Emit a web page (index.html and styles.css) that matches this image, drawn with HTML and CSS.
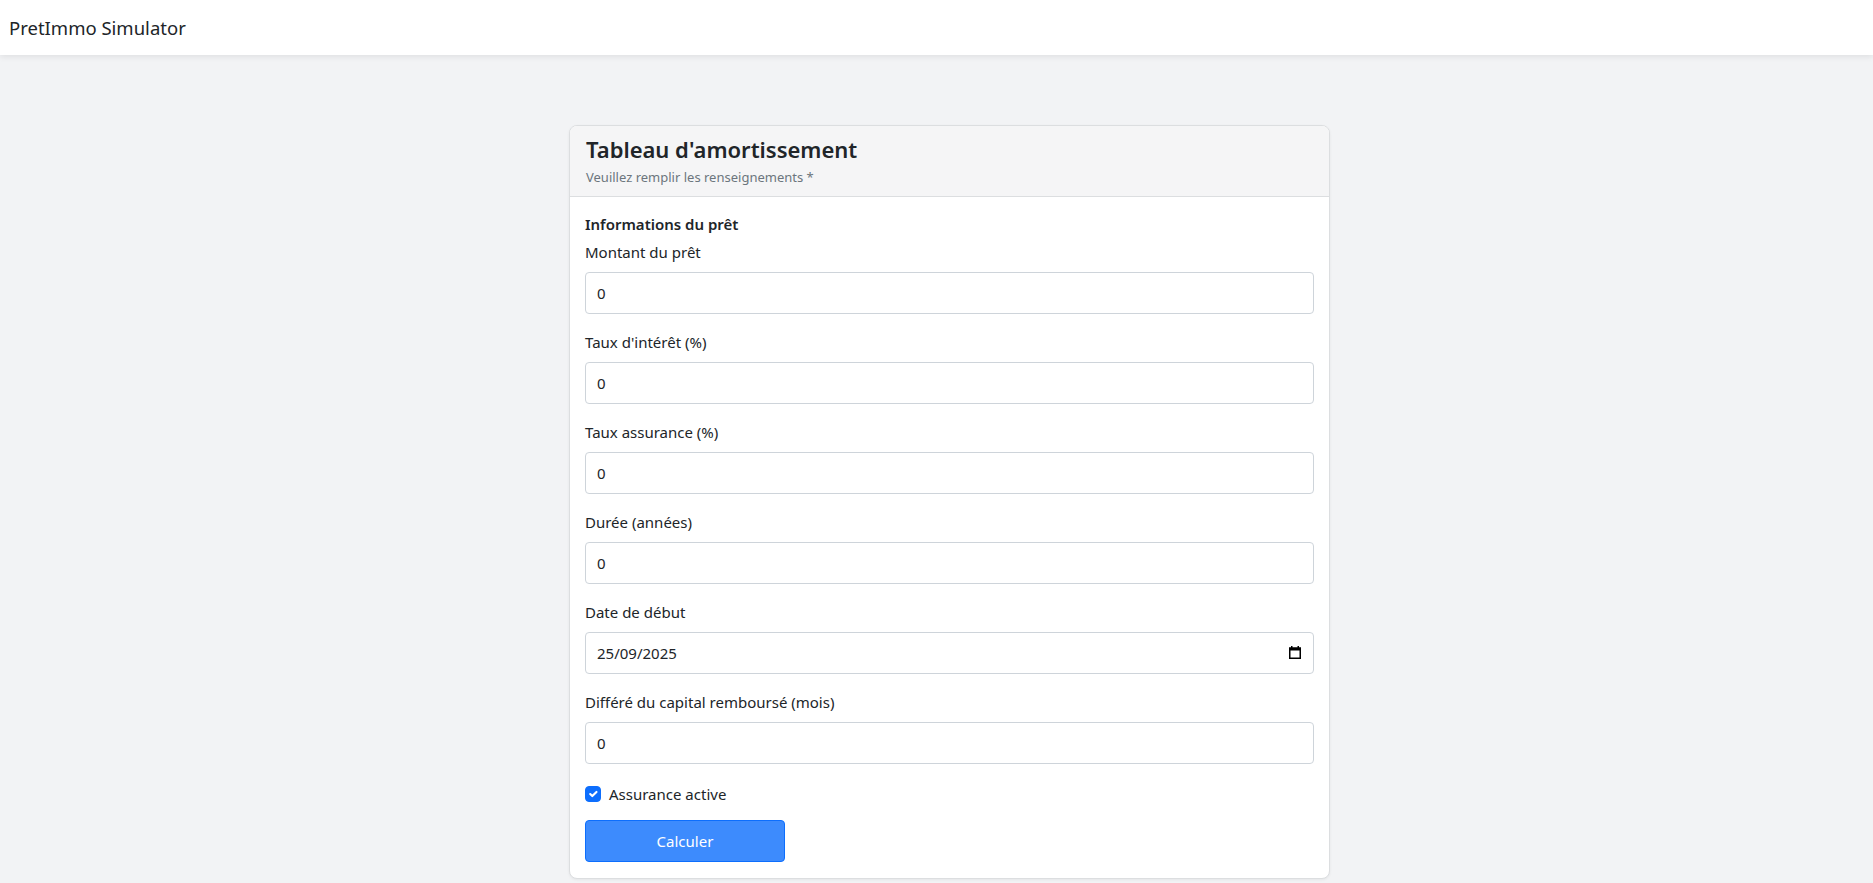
FILE: index.html
```html
<!DOCTYPE html>
<html lang="fr">
<head>
<meta charset="utf-8">
<title>PretImmo Simulator</title>
<link rel="stylesheet" href="styles.css">
</head>
<body>
<nav class="navbar"><span class="brand">PretImmo Simulator</span></nav>
<main class="page">
  <section class="card">
    <header class="card-header">
      <h1 class="card-title">Tableau d'amortissement</h1>
      <p class="card-subtitle">Veuillez remplir les renseignements *</p>
    </header>
    <form class="card-body">
      <h2 class="section-title">Informations du prêt</h2>
      <div class="field">
        <label class="label">Montant du prêt</label>
        <input class="input" type="text" value="0">
      </div>
      <div class="field">
        <label class="label">Taux d'intérêt (%)</label>
        <input class="input" type="text" value="0">
      </div>
      <div class="field">
        <label class="label">Taux assurance (%)</label>
        <input class="input" type="text" value="0">
      </div>
      <div class="field">
        <label class="label">Durée (années)</label>
        <input class="input" type="text" value="0">
      </div>
      <div class="field">
        <label class="label">Date de début</label>
        <div class="date-wrap">
          <input class="input" type="text" value="25/09/2025">
          <svg class="cal-icon" width="12" height="13" viewBox="0 0 12 13"><rect x="0.75" y="2.25" width="10.5" height="10" fill="none" stroke="#000" stroke-width="1.5"/><rect x="0" y="1.5" width="12" height="3" fill="#000"/><rect x="2" y="0" width="1.5" height="2" fill="#000"/><rect x="8.5" y="0" width="1.5" height="2" fill="#000"/></svg>
        </div>
      </div>
      <div class="field">
        <label class="label">Différé du capital remboursé (mois)</label>
        <input class="input" type="text" value="0">
      </div>
      <div class="check-row">
        <input class="check" type="checkbox" checked>
        <span class="check-label">Assurance active</span>
      </div>
      <button class="btn" type="button">Calculer</button>
    </form>
  </section>
</main>
</body>
</html>
```
FILE: styles.css
```css
* { box-sizing: border-box; }
html, body { margin: 0; padding: 0; }
body {
  font-family: "Segoe UI", "Noto Sans", "Open Sans", sans-serif;
  color: #212529;
  background: #f2f3f5;
  font-size: 16px;
  line-height: 1.5;
}
.navbar {
  height: 55px;
  background: #fff;
  display: flex;
  align-items: center;
  padding: 0 9px;
  box-shadow: 0 2px 6px rgba(0,0,0,0.08);
  position: relative;
}
.brand { font-size: 18.5px; }
.page { padding-top: 70px; padding-bottom: 5px; }
.card {
  margin-left: 569px;
  width: 761px;
  background: #fff;
  border: 1px solid #dcdee0;
  border-radius: 8px;
  box-shadow: 0 1px 3px rgba(0,0,0,0.06);
  overflow: hidden;
}
.card-header {
  background: #f5f5f6;
  border-bottom: 1px solid #dcdee0;
  padding: 9px 16px 8px;
}
.card-title { margin: 0 0 3px; font-size: 22px; line-height: 29px; font-weight: 600; }
.card-subtitle { margin: 0; font-size: 13px; line-height: 21px; color: #6c757d; }
.card-body { padding: 15px 15px 16px; display: flex; flex-direction: column; }
.section-title { margin: 0 0 4px; font-size: 15px; line-height: 24px; font-weight: 600; }
.field { display: flex; flex-direction: column; margin-bottom: 16px; }
.label { font-size: 15px; line-height: 24px; margin-bottom: 8px; }
.input {
  height: 42px;
  width: 100%;
  border: 1px solid #ced4da;
  border-radius: 4px;
  padding: 0 12px 0 11px;
  font-family: inherit;
  font-size: 15px;
  color: #212529;
  background: #fff;
}
.date-wrap { position: relative; }
.cal-icon { position: absolute; right: 13px; top: 14px; }
.check-row { display: flex; align-items: center; gap: 8px; height: 24px; margin: 2px 0 14px; }
.check {
  appearance: none;
  -webkit-appearance: none;
  width: 16px; height: 16px; margin: 0;
  border-radius: 4px;
  background: #0d6efd url("data:image/svg+xml,%3csvg xmlns='http://www.w3.org/2000/svg' viewBox='0 0 20 20'%3e%3cpath fill='none' stroke='%23fff' stroke-linecap='round' stroke-linejoin='round' stroke-width='3' d='m6 10 3 3 6-6'/%3e%3c/svg%3e") center/100% no-repeat;
  border: 1px solid #0d6efd;
}
.check-label { font-size: 15px; }
.btn {
  align-self: flex-start;
  width: 200px; height: 42px;
  background: #3d8bfd;
  border: 1px solid #0d6efd;
  border-radius: 4px;
  color: #fff;
  font-family: inherit;
  font-size: 15px;
}
```
